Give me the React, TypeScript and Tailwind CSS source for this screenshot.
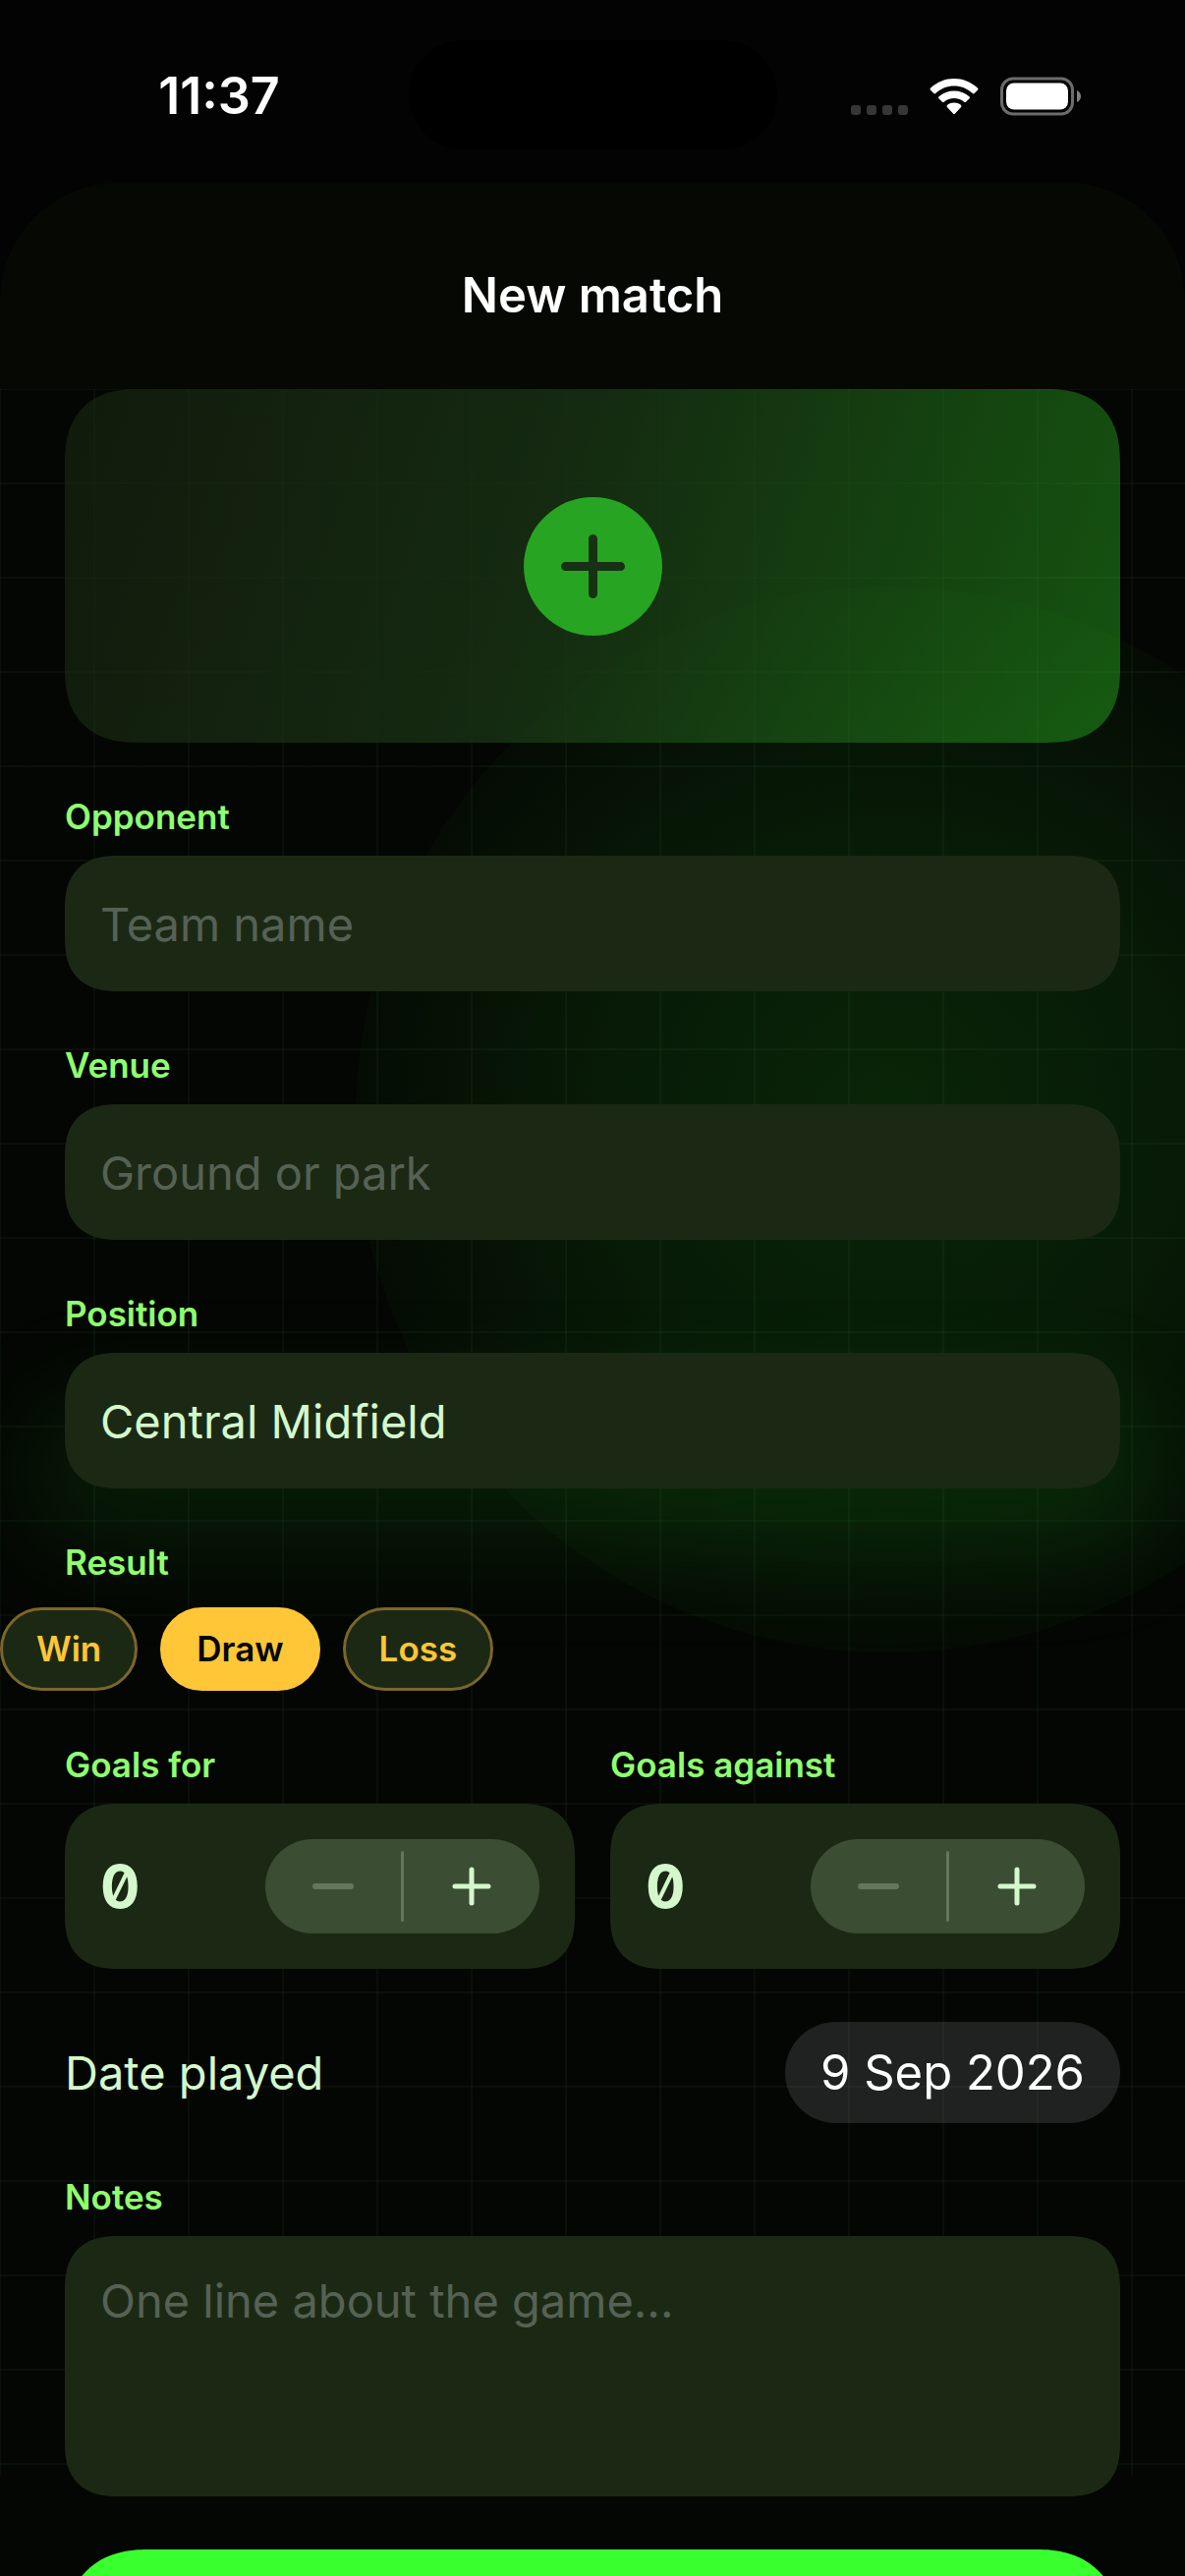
import React, { useState } from 'react';

const results = ['Win', 'Draw', 'Loss'];

const StatusBar: React.FC = () => (
    <div className="flex h-[186px] shrink-0 items-start justify-between px-[105px] pt-[41px]">
        <div className="flex h-[114px] w-[236px] items-center justify-center text-[52px] leading-[60px] font-semibold text-white">
            11:37
        </div>
        <div className="h-[111px] w-[375px] rounded-full bg-black" />
        <div className="flex h-[114px] w-[236px] items-center justify-end gap-[22px]">
            <svg className="h-[40px] w-[58px]" viewBox="0 0 58 40" fill="#363636">
                <rect x="0" y="29" width="10" height="10" rx="3" />
                <rect x="16" y="29" width="10" height="10" rx="3" />
                <rect x="32" y="29" width="10" height="10" rx="3" />
                <rect x="48" y="29" width="10" height="10" rx="3" />
            </svg>
            <svg className="h-[40px] w-[50px]" viewBox="0 0 50 40" fill="white">
                <path d="M1.2 11.6 C14.5 -1.2 35.5 -1.2 48.8 11.6 Q50 12.6 49 13.7 L45.6 17 Q44.8 17.8 43.8 16.9 C33 7 17 7 6.2 16.9 Q5.2 17.8 4.4 17 L1 13.7 Q0 12.6 1.2 11.6 Z" />
                <path d="M9.6 20.2 C18.2 12.6 31.8 12.6 40.4 20.2 Q41.6 21.3 40.6 22.3 L37 25.8 Q36.2 26.6 35.2 25.7 C29.4 20.8 20.6 20.8 14.8 25.7 Q13.8 26.6 13 25.8 L9.4 22.3 Q8.4 21.3 9.6 20.2 Z" />
                <path d="M18.2 28.8 C22 25.8 28 25.8 31.8 28.8 Q33.2 30 32.1 31.1 L26.1 37.4 Q25 38.5 23.9 37.4 L17.9 31.1 Q16.8 30 18.2 28.8 Z" />
            </svg>
            <svg className="h-[40px] w-[83px]" viewBox="0 0 83 40" fill="none">
                <rect x="1.5" y="2" width="72" height="36" rx="11.5" stroke="#6b6b6b" strokeWidth="3" />
                <rect x="6" y="6.5" width="63" height="27" rx="8" fill="white" />
                <path d="M78 14 Q82 16 82 20 Q82 24 78 26 Z" fill="#808080" />
            </svg>
        </div>
    </div>
);

const Backdrop: React.FC = () => (
    <div className="pointer-events-none absolute inset-x-0 top-0 bottom-[102px]">
        <div className="absolute top-[201px] left-[362px] size-[1085px] rounded-full bg-[radial-gradient(circle,rgba(32,190,30,0.17)_0%,rgba(32,190,30,0.11)_40%,rgba(32,190,30,0.03)_70%)]" />
        <div className="absolute inset-x-[24px] top-[1026px] h-[156px] rounded-full bg-[rgba(32,190,30,0.12)] blur-[50px]" />
        <div className="absolute inset-0 bg-[linear-gradient(to_right,rgba(110,255,130,0.04)_2px,transparent_2px),linear-gradient(to_bottom,rgba(110,255,130,0.04)_2px,transparent_2px)] bg-[size:96px_96px] bg-[position:-1px_-1px]" />
    </div>
);

const Label: React.FC<{ htmlFor?: string; children: React.ReactNode }> = ({ htmlFor, children }) => (
    <label htmlFor={htmlFor} className="block text-[35px] leading-[43px] font-semibold text-[#8fff70]">
        {children}
    </label>
);

interface FieldProps {
    id: string;
    label: string;
    placeholder?: string;
    value?: string;
}

const Field: React.FC<FieldProps> = ({ id, label, placeholder, value }) => (
    <div className="flex flex-col gap-[18px] px-[66px]">
        <Label htmlFor={id}>{label}</Label>
        <input
            id={id}
            type="text"
            placeholder={placeholder}
            defaultValue={value}
            className="h-[138px] w-full rounded-[54px] bg-[#1b2914] px-[36px] text-[47px] leading-[60px] text-[#d4f8cc] outline-none [corner-shape:superellipse(1.3)] placeholder:text-[#566154]"
        />
    </div>
);

const Counter: React.FC<{ id: string; label: string }> = ({ id, label }) => {
    const [count, setCount] = useState(0);

    return (
        <div className="flex flex-1 flex-col gap-[18px]">
            <Label htmlFor={id}>{label}</Label>
            <div className="flex items-center justify-between rounded-[54px] bg-[#1b2914] p-[36px] [corner-shape:superellipse(1.3)]">
                <output id={id} className="text-[60px] leading-[72px] font-bold text-[#d4f8cc] slashed-zero">
                    {count}
                </output>
                <div className="flex h-[96px] w-[279px] items-center rounded-full bg-[#3b4e33]">
                    <button
                        type="button"
                        aria-label="Decrease"
                        disabled={count === 0}
                        onClick={() => setCount(count - 1)}
                        className="flex h-full flex-1 items-center justify-center text-[#d4f8cc] disabled:text-[#63775c]"
                    >
                        <svg className="size-[48px]" viewBox="0 0 48 48" stroke="currentColor" strokeWidth="6" strokeLinecap="round">
                            <path d="M6 24H42" />
                        </svg>
                    </button>
                    <div className="h-[72px] w-[3px] rounded-full bg-[#63775c]" />
                    <button
                        type="button"
                        aria-label="Increase"
                        onClick={() => setCount(count + 1)}
                        className="flex h-full flex-1 items-center justify-center text-[#d4f8cc]"
                    >
                        <svg className="size-[48px]" viewBox="0 0 48 48" stroke="currentColor" strokeWidth="5" strokeLinecap="round">
                            <path d="M7 24H41M24 7V41" />
                        </svg>
                    </button>
                </div>
            </div>
        </div>
    );
};

export default function App() {
    const [result, setResult] = useState('Draw');

    return (
        <div className="flex h-screen flex-col overflow-hidden bg-[#030303] font-['Inter','Liberation_Sans',sans-serif]">
            <StatusBar />
            <main className="flex min-h-0 flex-1 flex-col overflow-hidden rounded-t-[120px] bg-[#040603]">
                <header className="flex h-[210px] shrink-0 items-center justify-center bg-[#060804] pt-[20px]">
                    <h1 className="text-[49px] leading-[60px] font-semibold text-white">New match</h1>
                </header>

                <form className="relative min-h-0 flex-1 overflow-hidden" onSubmit={(e) => e.preventDefault()}>
                    <Backdrop />
                    <div className="relative flex flex-col gap-[54px]">
                        <div className="px-[66px]">
                            <button
                                type="button"
                                aria-label="Add photo"
                                className="flex h-[360px] w-full items-center justify-center rounded-[76px] bg-[linear-gradient(108deg,rgba(26,40,18,0.6)_0%,rgba(23,48,19,0.86)_45%,rgba(52,235,40,0.34)_100%)] [corner-shape:superellipse(1.3)]"
                            >
                                <svg className="size-[141px]" viewBox="0 0 141 141" fill="none">
                                    <circle cx="70.5" cy="70.5" r="70.5" fill="#28a423" />
                                    <path d="M42.5 70.5H98.5M70.5 42.5V98.5" stroke="#173114" strokeWidth="9" strokeLinecap="round" />
                                </svg>
                            </button>
                        </div>

                        <Field id="opponent" label="Opponent" placeholder="Team name" />
                        <Field id="venue" label="Venue" placeholder="Ground or park" />
                        <Field id="position" label="Position" value="Central Midfield" />

                        <div className="flex flex-col gap-[24px]">
                            <div id="result-label" className="px-[66px] text-[35px] leading-[43px] font-semibold text-[#8fff70]">
                                Result
                            </div>
                            <div role="group" aria-labelledby="result-label" className="flex gap-[23px]">
                                {results.map((item) => (
                                    <button
                                        key={item}
                                        type="button"
                                        aria-pressed={item === result}
                                        onClick={() => setResult(item)}
                                        className={`h-[85px] rounded-full border-3 px-[34px] text-[35px] leading-[43px] font-semibold ${
                                            item === result
                                                ? 'border-[#ffc638] bg-[#ffc638] text-[#060804]'
                                                : 'border-[#7b662a] bg-[#1b2914] text-[#ffc638]'
                                        }`}
                                    >
                                        {item}
                                    </button>
                                ))}
                            </div>
                        </div>

                        <div className="flex gap-[36px] px-[66px]">
                            <Counter id="goals-for" label="Goals for" />
                            <Counter id="goals-against" label="Goals against" />
                        </div>

                        <div className="flex items-center justify-between px-[66px]">
                            <label htmlFor="date-played" className="text-[47px] leading-[60px] text-[#d4f8cc]">
                                Date played
                            </label>
                            <button
                                id="date-played"
                                type="button"
                                className="h-[103px] rounded-full bg-[rgba(120,120,128,0.24)] px-[36px] text-[49px] leading-[60px] text-white"
                            >
                                9 Sep 2026
                            </button>
                        </div>

                        <div className="flex flex-col gap-[18px] px-[66px]">
                            <Label htmlFor="notes">Notes</Label>
                            <textarea
                                id="notes"
                                placeholder="One line about the game..."
                                className="block h-[265px] w-full resize-none rounded-[54px] bg-[#1b2914] p-[36px] text-[47px] leading-[60px] text-[#d4f8cc] outline-none [corner-shape:superellipse(1.3)] placeholder:text-[#566154]"
                            />
                        </div>

                        <div className="px-[66px]">
                            <button
                                type="submit"
                                aria-label="Save match"
                                className="block h-[168px] w-full rounded-[84px] bg-[#39ff2f] [corner-shape:superellipse(1.2)]"
                            />
                        </div>
                    </div>
                </form>
            </main>
        </div>
    );
}
